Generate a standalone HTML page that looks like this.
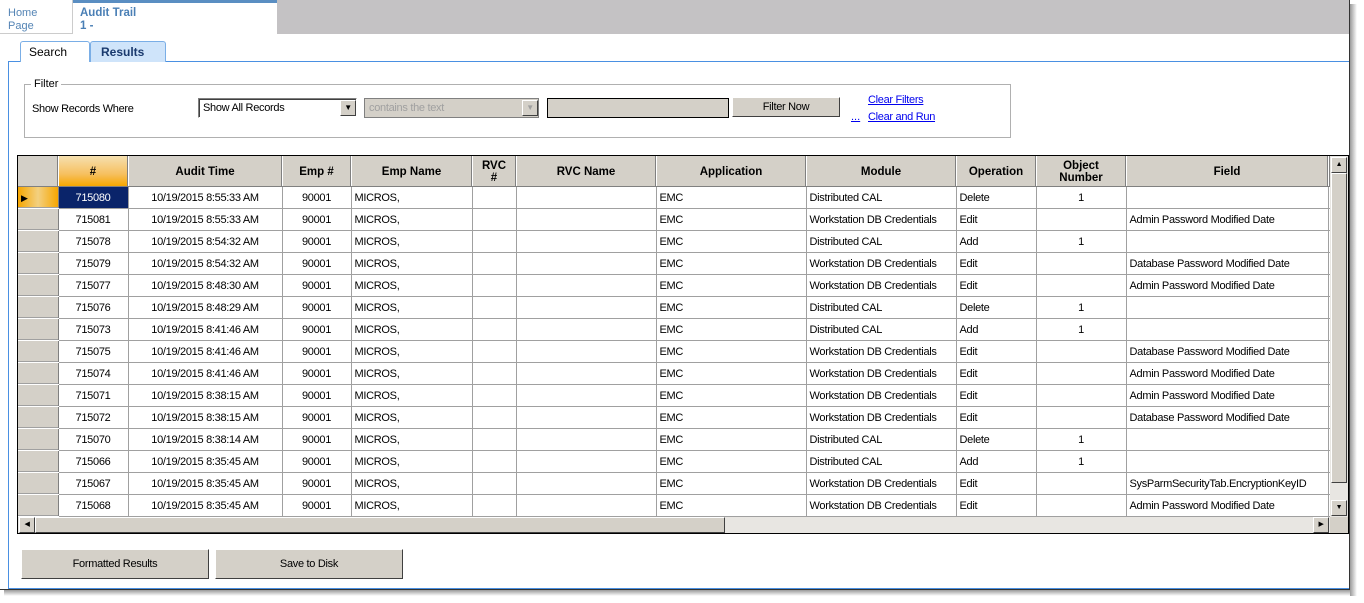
<!DOCTYPE html>
<html><head><style>
*{box-sizing:border-box;margin:0;padding:0}
body{width:1364px;height:603px;background:#fff;position:relative;overflow:hidden;font-family:"Liberation Sans",Arial,sans-serif;font-size:11px;color:#000}
.a{position:absolute}
table{border-collapse:collapse;table-layout:fixed}
td{border-right:1px solid #a0a0a0;border-bottom:1px solid #a0a0a0;height:22px;padding:2px 3px 0;white-space:nowrap;overflow:hidden;font-size:11px;letter-spacing:-0.3px}
th{background:#d4d0c8;height:30px;padding-top:3px;border-right:1px solid #fff;border-bottom:1px solid #808080;font-size:11.5px;font-weight:bold;line-height:12px;box-shadow:inset -1px 0 #808080}
td.rh{background:#d4d0c8;border-right:1px solid #808080;border-bottom:1px solid #fff;box-shadow:inset 0 -1px #a0a0a0}
.c{text-align:center}
.btn{background:#d4d0c8;border:1px solid #fff;border-right-color:#404040;border-bottom-color:#404040;text-align:center;font-size:11px;letter-spacing:-0.3px}
a{color:#0000ee;text-decoration:underline}
</style></head><body>
<div class="a" style="left:4px;top:590px;width:1352px;height:6px;background:linear-gradient(#999,#fff)"></div>
<div class="a" style="left:1350px;top:4px;width:7px;height:592px;background:linear-gradient(90deg,#999,#fff)"></div>
<div class="a" style="left:0;top:0;width:1350px;height:590px;border:1px solid #333;border-top:none;border-left:none;background:#fff"></div>
<div class="a" style="left:277px;top:0;width:1072px;height:34px;background:#c4c2c4"></div>
<div class="a" style="left:0;top:0;width:73px;height:34px;border-right:1px solid #ccc;border-bottom:1px solid #ccc;color:#5585b5;font-size:11px;padding:7px 0 0 8px;line-height:13px">Home<br>Page</div>
<div class="a" style="left:73px;top:0;width:204px;height:34px;border-top:3px solid #5a8ec2;color:#4a7fb5;font-weight:bold;font-size:11.5px;padding:4px 0 0 7px;line-height:13px">Audit Trail<br>1 -</div>
<div class="a" style="left:8px;top:61px;width:1341px;height:528px;border-left:1px solid #4a90e2;border-top:1px solid #4a90e2;border-bottom:1px solid #4a90e2"></div>
<div class="a" style="left:20px;top:41px;width:70px;height:21px;border:1px solid #7aaee6;border-bottom:none;border-radius:3px 3px 0 0;background:#fff;padding:3px 0 0 8px;font-size:12px">Search</div>
<div class="a" style="left:90px;top:41px;width:76px;height:21px;border:1px solid #7aaee6;border-bottom:none;border-radius:3px 3px 0 0;background:#cfe4fa;padding:3px 0 0 10px;font-size:12px;font-weight:bold;color:#1a3a6e">Results</div>
<div class="a" style="left:24px;top:84px;width:987px;height:54px;border:1px solid #b0b0b0"></div>
<div class="a" style="left:31px;top:78px;background:#fff;padding:0 3px;font-size:11px">Filter</div>
<div class="a" style="left:32px;top:103px;font-size:11px;letter-spacing:-0.3px">Show Records Where</div>
<div class="a" style="left:198px;top:98px;width:159px;height:20px;border:1px solid #808080;border-right-color:#fff;border-bottom-color:#fff;box-shadow:inset 1px 1px #404040;background:#fff;padding:3px 4px;font-size:11px;letter-spacing:-0.3px">Show All Records</div>
<div class="a btn" style="left:340px;top:100px;width:16px;height:16px;font-size:8px;line-height:14px">▼</div>
<div class="a" style="left:364px;top:98px;width:175px;height:20px;border:1px solid #808080;background:#d4d0c8;padding:3px 4px;font-size:11px;color:#a0a0a0;letter-spacing:-0.3px">contains the text</div>
<div class="a btn" style="left:522px;top:100px;width:16px;height:16px;font-size:8px;line-height:14px;color:#a0a0a0">▼</div>
<div class="a" style="left:547px;top:98px;width:182px;height:20px;border:1px solid #000;background:#d4d0c8"></div>
<div class="a btn" style="left:732px;top:97px;width:108px;height:20px;line-height:19px">Filter Now</div>
<a class="a" style="left:868px;top:94px;font-size:11px;letter-spacing:-0.3px">Clear Filters</a>
<a class="a" style="left:851px;top:111px;font-size:11px">...</a>
<a class="a" style="left:868px;top:111px;font-size:11px;letter-spacing:-0.3px">Clear and Run</a>
<div class="a" style="left:17px;top:155px;width:1332px;height:379px;border:1px solid #000;background:#fff;overflow:hidden">
<table style="width:1312px">
<colgroup><col style="width:40px"><col style="width:70px"><col style="width:154px"><col style="width:69px"><col style="width:121px"><col style="width:44px"><col style="width:140px"><col style="width:150px"><col style="width:150px"><col style="width:80px"><col style="width:90px"><col style="width:202px"><col style="width:2px"></colgroup>
<tr><th></th><th style="background:linear-gradient(#f5e0b0,#f6c060 60%,#f6a600)">#</th><th>Audit Time</th><th>Emp #</th><th>Emp Name</th><th>RVC<br>#</th><th>RVC Name</th><th>Application</th><th>Module</th><th>Operation</th><th>Object<br>Number</th><th>Field</th><th></th></tr>
<tr><td class="rh" style="background:linear-gradient(90deg,#f6a600,#f3d080 50%,#f6a600);font-size:9px">▶</td><td class="c" style="background:#0a246a;color:#fff">715080</td><td class="c">10/19/2015 8:55:33 AM</td><td class="c">90001</td><td>MICROS,</td><td></td><td></td><td>EMC</td><td>Distributed CAL</td><td>Delete</td><td class="c">1</td><td></td><td></td></tr>
<tr><td class="rh"></td><td class="c">715081</td><td class="c">10/19/2015 8:55:33 AM</td><td class="c">90001</td><td>MICROS,</td><td></td><td></td><td>EMC</td><td>Workstation DB Credentials</td><td>Edit</td><td></td><td>Admin Password Modified Date</td><td></td></tr>
<tr><td class="rh"></td><td class="c">715078</td><td class="c">10/19/2015 8:54:32 AM</td><td class="c">90001</td><td>MICROS,</td><td></td><td></td><td>EMC</td><td>Distributed CAL</td><td>Add</td><td class="c">1</td><td></td><td></td></tr>
<tr><td class="rh"></td><td class="c">715079</td><td class="c">10/19/2015 8:54:32 AM</td><td class="c">90001</td><td>MICROS,</td><td></td><td></td><td>EMC</td><td>Workstation DB Credentials</td><td>Edit</td><td></td><td>Database Password Modified Date</td><td></td></tr>
<tr><td class="rh"></td><td class="c">715077</td><td class="c">10/19/2015 8:48:30 AM</td><td class="c">90001</td><td>MICROS,</td><td></td><td></td><td>EMC</td><td>Workstation DB Credentials</td><td>Edit</td><td></td><td>Admin Password Modified Date</td><td></td></tr>
<tr><td class="rh"></td><td class="c">715076</td><td class="c">10/19/2015 8:48:29 AM</td><td class="c">90001</td><td>MICROS,</td><td></td><td></td><td>EMC</td><td>Distributed CAL</td><td>Delete</td><td class="c">1</td><td></td><td></td></tr>
<tr><td class="rh"></td><td class="c">715073</td><td class="c">10/19/2015 8:41:46 AM</td><td class="c">90001</td><td>MICROS,</td><td></td><td></td><td>EMC</td><td>Distributed CAL</td><td>Add</td><td class="c">1</td><td></td><td></td></tr>
<tr><td class="rh"></td><td class="c">715075</td><td class="c">10/19/2015 8:41:46 AM</td><td class="c">90001</td><td>MICROS,</td><td></td><td></td><td>EMC</td><td>Workstation DB Credentials</td><td>Edit</td><td></td><td>Database Password Modified Date</td><td></td></tr>
<tr><td class="rh"></td><td class="c">715074</td><td class="c">10/19/2015 8:41:46 AM</td><td class="c">90001</td><td>MICROS,</td><td></td><td></td><td>EMC</td><td>Workstation DB Credentials</td><td>Edit</td><td></td><td>Admin Password Modified Date</td><td></td></tr>
<tr><td class="rh"></td><td class="c">715071</td><td class="c">10/19/2015 8:38:15 AM</td><td class="c">90001</td><td>MICROS,</td><td></td><td></td><td>EMC</td><td>Workstation DB Credentials</td><td>Edit</td><td></td><td>Admin Password Modified Date</td><td></td></tr>
<tr><td class="rh"></td><td class="c">715072</td><td class="c">10/19/2015 8:38:15 AM</td><td class="c">90001</td><td>MICROS,</td><td></td><td></td><td>EMC</td><td>Workstation DB Credentials</td><td>Edit</td><td></td><td>Database Password Modified Date</td><td></td></tr>
<tr><td class="rh"></td><td class="c">715070</td><td class="c">10/19/2015 8:38:14 AM</td><td class="c">90001</td><td>MICROS,</td><td></td><td></td><td>EMC</td><td>Distributed CAL</td><td>Delete</td><td class="c">1</td><td></td><td></td></tr>
<tr><td class="rh"></td><td class="c">715066</td><td class="c">10/19/2015 8:35:45 AM</td><td class="c">90001</td><td>MICROS,</td><td></td><td></td><td>EMC</td><td>Distributed CAL</td><td>Add</td><td class="c">1</td><td></td><td></td></tr>
<tr><td class="rh"></td><td class="c">715067</td><td class="c">10/19/2015 8:35:45 AM</td><td class="c">90001</td><td>MICROS,</td><td></td><td></td><td>EMC</td><td>Workstation DB Credentials</td><td>Edit</td><td></td><td>SysParmSecurityTab.EncryptionKeyID</td><td></td></tr>
<tr><td class="rh"></td><td class="c">715068</td><td class="c">10/19/2015 8:35:45 AM</td><td class="c">90001</td><td>MICROS,</td><td></td><td></td><td>EMC</td><td>Workstation DB Credentials</td><td>Edit</td><td></td><td>Admin Password Modified Date</td><td></td></tr>
</table>
<div class="a" style="left:1312px;top:0;width:18px;height:361px;background:#e8e6e2"></div>
<div class="a btn" style="left:1313px;top:1px;width:16px;height:16px;font-size:7px;line-height:14px">▲</div>
<div class="a btn" style="left:1313px;top:17px;width:16px;height:310px"></div>
<div class="a btn" style="left:1313px;top:344px;width:16px;height:16px;font-size:7px;line-height:14px">▼</div>
<div class="a" style="left:0;top:361px;width:1312px;height:16px;background:#e8e6e2"></div>
<div class="a btn" style="left:1px;top:361px;width:16px;height:16px;font-size:7px;line-height:14px">◀</div>
<div class="a btn" style="left:17px;top:361px;width:690px;height:16px"></div>
<div class="a btn" style="left:1295px;top:361px;width:16px;height:16px;font-size:7px;line-height:14px">▶</div>
<div class="a" style="left:1312px;top:361px;width:18px;height:16px;background:#d4d0c8"></div>
</div>
<div class="a btn" style="left:21px;top:549px;width:188px;height:30px;line-height:28px">Formatted Results</div>
<div class="a btn" style="left:215px;top:549px;width:188px;height:30px;line-height:28px">Save to Disk</div>
</body></html>
